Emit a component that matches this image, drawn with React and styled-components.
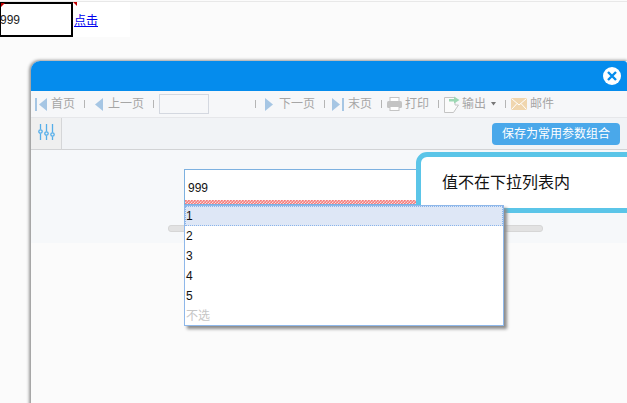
import React from 'react';
import styled, { createGlobalStyle } from 'styled-components';

const GlobalStyle = createGlobalStyle`
    html, body {
        margin: 0;
        padding: 0;
        background: #fbfbfb;
        font-family: "Liberation Sans", "Noto Sans CJK SC", sans-serif;
        font-size: 12px;
    }
`;

const Pagina = styled.div`
    width: 627px;
    height: 403px;
    overflow: hidden;
    box-sizing: border-box;
    padding-top: 1px;
`;

const Linea = styled.div`
    height: 1px;
    background: #e8e8e8;
`;

const Cabecera = styled.div`
    position: relative;
    display: flex;
    align-items: flex-start;
    width: 130px;
    height: 35px;
    background: #fff;
`;

const Celda = styled.div`
    box-sizing: border-box;
    width: 73px;
    height: 35px;
    border: 2px solid #000;
    border-left-width: 1px;
    line-height: 32px;
    text-indent: -1px;
    color: #222;
`;

const Marca = styled.span`
    position: absolute;
    top: ${(p) => p.$top}px;
    left: ${(p) => p.$left}px;
    width: 0;
    height: 0;
    border-top: 4px solid #c00000;
    border-${(p) => p.$lado}: 4px solid transparent;
`;

const Enlace = styled.a`
    margin: 2px 0 0 1px;
    line-height: 35px;
    color: #0000ee;
    text-decoration: underline;
`;

const Ventana = styled.div`
    position: relative;
    width: 596px;
    height: 400px;
    margin: 24px 0 0 31px;
    background: #fbfbfb;
    border-top-left-radius: 9px;
    box-shadow: -1px 0 3px 1px #999;
`;

const Titulo = styled.div`
    display: flex;
    align-items: center;
    height: 30px;
    background: #058ced;
    border-top-left-radius: 9px;
    border-top-right-radius: 3px;
    padding-left: 572px;
`;

const BarraHerramientas = styled.div`
    display: flex;
    align-items: center;
    box-sizing: border-box;
    height: 27px;
    padding-left: 4px;
    background: #f6f7f9;
    border-bottom: 1px solid #e6e7ea;
    color: #a6a6a6;
    white-space: nowrap;
`;

const Item = styled.span`
    display: inline-flex;
    align-items: center;
    gap: ${(p) => p.$gap || 4}px;
    line-height: 16px;
`;

const Separador = styled.span`
    width: 1px;
    height: 8px;
    margin: 0 ${(p) => p.$right || 9}px 0 ${(p) => p.$left || 9}px;
    background: #b5b5b5;
`;

const CajaPagina = styled.div`
    box-sizing: border-box;
    width: 50px;
    height: 20px;
    border: 1px solid #d4d8e0;
    background: #f6f7f9;
`;

const Flecha = styled.span`
    display: inline-flex;
    margin-left: 5px;
`;

const BarraFiltro = styled.div`
    display: flex;
    justify-content: space-between;
    box-sizing: border-box;
    height: 32px;
    background: #f1f3f6;
    border-bottom: 1px solid #d2d3d5;
`;

const Pestana = styled.div`
    display: flex;
    align-items: center;
    justify-content: center;
    box-sizing: border-box;
    width: 31px;
    height: 32px;
    padding-bottom: 2px;
    background: #efefef;
    border-right: 1px solid #d5d6d8;
    border-bottom: 1px solid #d2d3d5;
`;

const BotonGuardar = styled.div`
    width: 128px;
    height: 22px;
    margin: 5px 7px 0 0;
    border-radius: 4px;
    background: #4aa8ea;
    color: #fff;
    font-size: 12px;
    line-height: 22px;
    text-align: center;
`;

const Cuerpo = styled.div`
    box-sizing: border-box;
    height: 93px;
    padding: 19px 0 0 137px;
    background: #f6f8fa;
`;

const Campo = styled.div`
    position: relative;
    box-sizing: border-box;
    width: 320px;
    height: 36px;
    margin-left: 16px;
    padding: 11px 0 0 3px;
    border: 1px solid #7db1e0;
    background: #fff;
    color: #111;
    line-height: 14px;
`;

const Ondulado = styled.div`
    position: absolute;
    left: 0;
    right: 0;
    bottom: 0;
    height: 4px;
    background-color: #f47c7c;
    background-image:
        linear-gradient(45deg, #fcd8d8 25%, transparent 25%, transparent 75%, #fcd8d8 75%),
        linear-gradient(45deg, #fcd8d8 25%, transparent 25%, transparent 75%, #fcd8d8 75%);
    background-size: 3px 3px;
    background-position: 0 0, 1.5px 1.5px;
`;

const Pista = styled.div`
    box-sizing: border-box;
    width: 375px;
    height: 7px;
    margin-top: 20px;
    border: 1px solid #d6d6d6;
    border-radius: 3px;
    background: #e2e2e2;
`;

const Lista = styled.div`
    position: absolute;
    left: 153px;
    top: 144px;
    box-sizing: border-box;
    width: 320px;
    height: 121px;
    border: 1px solid #8fb8ea;
    background: #fff;
    box-shadow: 3px 3px 3px #8c8c8c;
`;

const Opcion = styled.div`
    box-sizing: border-box;
    height: 20px;
    padding-left: 1px;
    line-height: 20px;
    color: ${(p) => (p.$vacio ? '#c6c6c6' : '#111')};
    background: ${(p) => (p.$activa ? '#dee7f6' : 'transparent')};
    outline: ${(p) => (p.$activa ? '1px dotted #8ab4ea' : 'none')};
    outline-offset: -1px;
`;

const Aviso = styled.div`
    position: absolute;
    left: 385px;
    top: 91px;
    box-sizing: border-box;
    width: 300px;
    height: 61px;
    padding-left: 21px;
    border: 5px solid #5bc5e8;
    border-radius: 11px 0 0 3px;
    background: #fff;
    color: #111;
    font-size: 16px;
    line-height: 51px;
`;

const IconoCerrar = () => (
    <svg width="18" height="18" viewBox="0 0 18 18">
        <circle cx="9" cy="9" r="9" fill="#fff" />
        <path d="M5 5 L13 13 M13 5 L5 13" stroke="#058ced" strokeWidth="2.4" fill="none" />
    </svg>
);

const IconoPrimera = () => (
    <svg width="12" height="13" viewBox="0 0 12 13">
        <rect x="0" y="0" width="2" height="13" fill="#a6c6e4" />
        <path d="M12 0 V13 L4 6.5 Z" fill="#a6c6e4" />
    </svg>
);

const IconoAnterior = () => (
    <svg width="9" height="13" viewBox="0 0 9 13">
        <path d="M9 0 V13 L1 6.5 Z" fill="#a6c6e4" />
    </svg>
);

const IconoSiguiente = () => (
    <svg width="9" height="13" viewBox="0 0 9 13">
        <path d="M0 0 V13 L8 6.5 Z" fill="#a6c6e4" />
    </svg>
);

const IconoUltima = () => (
    <svg width="12" height="13" viewBox="0 0 12 13">
        <path d="M0 0 V13 L8 6.5 Z" fill="#a6c6e4" />
        <rect x="10" y="0" width="2" height="13" fill="#a6c6e4" />
    </svg>
);

const IconoImprimir = () => (
    <svg width="15" height="14" viewBox="0 0 15 14">
        <rect x="3" y="0.5" width="9" height="4" fill="#fff" stroke="#c4c4c4" />
        <rect x="0" y="4" width="15" height="7" rx="1.5" fill="#c4c4c4" />
        <rect x="3" y="9.5" width="9" height="4" fill="#fff" stroke="#c4c4c4" />
    </svg>
);

const IconoExportar = () => (
    <svg width="16" height="17" viewBox="0 0 16 17">
        <path d="M0.5 1.5 H11 V9 H14.5 L9.5 16.5 H0.5 Z" fill="#fbfbfb" stroke="#c4c4c4" />
        <path d="M5 3 H10 V0.5 L15.5 4 L10 7.5 V5.5 H5 Z" fill="#9ed8b4" />
    </svg>
);

const IconoCorreo = () => (
    <svg width="16" height="12" viewBox="0 0 16 12">
        <rect x="0" y="0" width="16" height="12" fill="#f0d6ae" />
        <path d="M0.5 0.5 L8 7 L15.5 0.5 M0.5 11.5 L6 5.5 M15.5 11.5 L10 5.5" stroke="#fff" fill="none" />
    </svg>
);

const IconoFiltro = () => (
    <svg width="17" height="17" viewBox="0 0 17 17" fill="none" stroke="#55aeea">
        <path d="M2.5 0 V5.5 M2.5 9.5 V16 M8.5 0 V7.5 M8.5 11.5 V16 M14.5 0 V8.5 M14.5 12.5 V16" strokeWidth="1.3" />
        <circle cx="2.5" cy="7.5" r="1.7" strokeWidth="1.3" />
        <circle cx="8.5" cy="9.5" r="1.7" strokeWidth="1.3" />
        <circle cx="14.5" cy="10.5" r="1.7" strokeWidth="1.3" />
    </svg>
);

const Triangulo = () => (
    <svg width="5" height="4" viewBox="0 0 5 4">
        <path d="M0 0 H5 L2.5 3.5 Z" fill="#777" />
    </svg>
);

const opciones = ['1', '2', '3', '4', '5'];

const App = () => {
    return (
        <Pagina>
            <GlobalStyle />
            <Linea />
            <Cabecera>
                <Celda>999</Celda>
                <Marca $top={1} $left={1} $lado="right" />
                <Marca $top={0} $left={73} $lado="left" />
                <Enlace href="#">点击</Enlace>
            </Cabecera>
            <Ventana>
                <Titulo>
                    <IconoCerrar />
                </Titulo>
                <BarraHerramientas>
                    <Item><IconoPrimera />首页</Item>
                    <Separador />
                    <Item $gap={5}><IconoAnterior />上一页</Item>
                    <Separador $right={5} />
                    <CajaPagina />
                    <Separador $left={46} />
                    <Item $gap={5}><IconoSiguiente />下一页</Item>
                    <Separador $right={7} />
                    <Item><IconoUltima />末页</Item>
                    <Separador $right={5} />
                    <Item $gap={3}><IconoImprimir />打印</Item>
                    <Separador $right={5} />
                    <Item $gap={2}><IconoExportar />输出</Item>
                    <Flecha><Triangulo /></Flecha>
                    <Separador $right={5} />
                    <Item $gap={3}>
                        <IconoCorreo />邮件
                    </Item>
                </BarraHerramientas>
                <BarraFiltro>
                    <Pestana>
                        <IconoFiltro />
                    </Pestana>
                    <BotonGuardar>保存为常用参数组合</BotonGuardar>
                </BarraFiltro>
                <Cuerpo>
                    <Campo>
                        999
                        <Ondulado />
                    </Campo>
                    <Pista />
                </Cuerpo>
                <Aviso>值不在下拉列表内</Aviso>
                <Lista>
                    {opciones.map((o, i) => (
                        <Opcion key={o} $activa={i === 0}>{o}</Opcion>
                    ))}
                    <Opcion $vacio>不选</Opcion>
                </Lista>
            </Ventana>
        </Pagina>
    );
};

export default App;
